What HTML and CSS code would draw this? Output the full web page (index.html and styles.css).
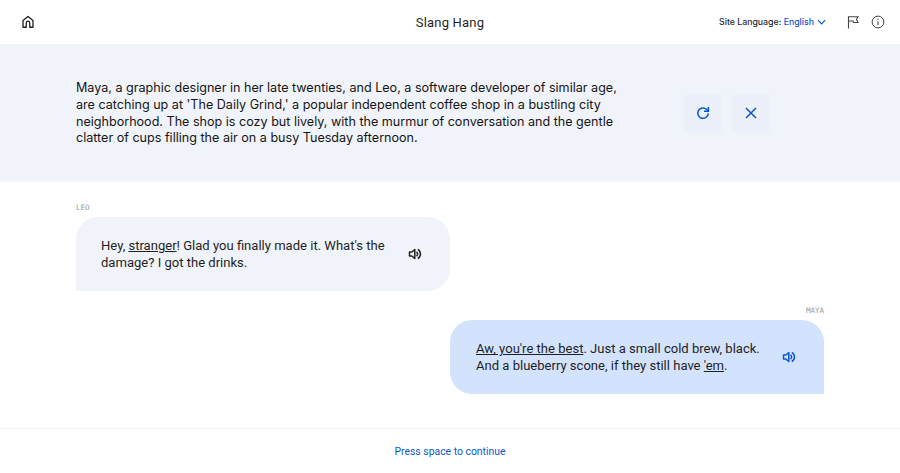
FILE: index.html
```html
<!DOCTYPE html>
<html lang="en">
<head>
<meta charset="utf-8">
<title>Slang Hang</title>
<link rel="stylesheet" href="styles.css">
</head>
<body>
<div class="page">
  <header class="top">
    <a class="icon-link home" aria-label="Home">
      <svg viewBox="0 0 24 24" width="14" height="14"><path d="M3.500 21V9.500L12 2.500l8.500 7V21h-5.500v-7.500a3 3 0 0 0-6 0V21z" fill="none" stroke="#1f1f1f" stroke-width="2.200" stroke-linejoin="round"/></svg>
    </a>
    <h1 class="title">Slang Hang</h1>
    <div class="tools">
      <span class="lang">Site Language: <b class="lang-value">English</b></span>
      <svg class="chev" viewBox="0 0 10 6" width="9" height="6"><path d="M1 1l4 4 4-4" fill="none" stroke="#0b57d0" stroke-width="1.300"/></svg>
      <svg class="flag" viewBox="0 0 14 14" width="14" height="14"><path d="M2.500 13.500V1.800h9.500l-1.500 2.600 1.500 3.100H7.500L7 6H2.500" fill="none" stroke="#444746" stroke-width="1.100"/></svg>
      <svg class="info" viewBox="0 0 14 14" width="14" height="14"><circle cx="7" cy="7" r="5.900" fill="none" stroke="#444746" stroke-width="1"/><path d="M7 6.200v4M7 3.800v1.200" stroke="#444746" stroke-width="1.100"/></svg>
    </div>
  </header>

  <section class="scene">
    <p class="scene-text">Maya, a graphic designer in her late twenties, and Leo, a software developer of similar age, are catching up at 'The Daily Grind,' a popular independent coffee shop in a bustling city neighborhood. The shop is cozy but lively, with the murmur of conversation and the gentle clatter of cups filling the air on a busy Tuesday afternoon.</p>
    <div class="scene-actions">
      <button class="square" aria-label="Restart">
        <svg viewBox="0 0 16 16" width="16" height="16"><path d="M13.200 8.200a5.200 5.200 0 1 1-1.700-3.900L13.300 6" fill="none" stroke="#0b57d0" stroke-width="1.500"/><path d="M13.400 1.900v4.400H9" fill="none" stroke="#0b57d0" stroke-width="1.500"/></svg>
      </button>
      <button class="square" aria-label="Close">
        <svg viewBox="0 0 16 16" width="16" height="16"><path d="M3 3l10 10M13 3L3 13" fill="none" stroke="#0b57d0" stroke-width="1.500"/></svg>
      </button>
    </div>
  </section>

  <main class="chat">
    <div class="msg left">
      <div class="speaker">LEO</div>
      <div class="bubble">
        <p class="bubble-text">Hey, <u>stranger</u>! Glad you finally made it. What's the damage? I got the drinks.</p>
        <svg class="speak" viewBox="0 0 14 14" width="14" height="14"><path d="M1.500 5h2.300L6.800 2.500v9L3.800 9H1.500z" fill="none" stroke="#1f1f1f" stroke-width="1.500" stroke-linejoin="round"/><path d="M8.500 4.800a2.800 2.800 0 0 1 0 4.400M9.800 2.300a5.500 5.500 0 0 1 0 9.400" fill="none" stroke="#1f1f1f" stroke-width="1.500"/></svg>
      </div>
    </div>
    <div class="msg right">
      <div class="speaker">MAYA</div>
      <div class="bubble user">
        <p class="bubble-text"><u>Aw, you're the best</u>. Just a small cold brew, black. And a blueberry scone, if they still have <u>'em</u>.</p>
        <svg class="speak" viewBox="0 0 14 14" width="14" height="14"><path d="M1.500 5h2.300L6.800 2.500v9L3.800 9H1.500z" fill="none" stroke="#0b57d0" stroke-width="1.500" stroke-linejoin="round"/><path d="M8.500 4.800a2.800 2.800 0 0 1 0 4.400M9.800 2.300a5.500 5.500 0 0 1 0 9.400" fill="none" stroke="#0b57d0" stroke-width="1.500"/></svg>
      </div>
    </div>
  </main>

  <footer class="foot">Press space to continue</footer>
</div>
</body>
</html>
```

FILE: styles.css
```css
* { box-sizing: border-box; }
html, body { margin: 0; padding: 0; background: #fff; }
body { font-family: Roboto, "Liberation Sans", sans-serif; color: #1f1f1f; }
.page { width: 900px; height: 473px; display: flex; flex-direction: column; overflow: hidden; }

.top { height: 44px; display: grid; grid-template-columns: 1fr auto 1fr; align-items: center; padding: 0 15px; }
.icon-link { display: flex; margin-left: 6px; }
.title { margin: 0; font-size: 13px; font-weight: 400; letter-spacing: 0.2px; }
.tools { display: flex; align-items: center; justify-content: flex-end; }
.lang { font-family: Inter, sans-serif; font-size: 8.75px; font-weight: 500; }
.lang-value { font-weight: 500; color: #0b57d0; }
.chev { margin-left: 3px; }
.flag { margin-left: 20px; }
.info { margin-left: 11px; }

.scene { height: 138px; background: #f0f3f9; display: flex; align-items: center; padding: 1px 130px 0 76px; }
.scene-text { margin: 0; width: 545px; font-family: Inter, sans-serif; font-size: 12.58px; line-height: 16.6px; color: #161616; flex: none; }
.scene-actions { display: flex; gap: 10px; margin: -1px 0 0 auto; }
.square { width: 38px; height: 38px; border: 0; padding: 0; background: #ebf0fa; border-radius: 2px; display: flex; align-items: center; justify-content: center; }

.chat { flex: 1; padding: 21px 76px 0; display: flex; flex-direction: column; }
.msg { width: 374px; }
.msg.right { align-self: flex-end; margin-top: 15px; }
.speaker { font-family: "DejaVu Sans Mono", monospace; font-size: 7.5px; line-height: 9px; color: #9a9a9a; margin-bottom: 5px; }
.right .speaker { text-align: right; }
.bubble { height: 74px; background: #f0f3f9; border-radius: 22px 22px 22px 0; display: flex; align-items: center; padding: 0 28px 0 25px; gap: 20px; }
.bubble.user { background: #d3e3fd; border-radius: 22px 22px 0 22px; padding-left: 26px; gap: 19px; }
.bubble-text { margin: 2px 0 0; flex: 1; font-size: 13.05px; line-height: 16.6px; }
.speak { flex: none; }

.foot { height: 45px; border-top: 1px solid #eceef0; display: flex; align-items: center; justify-content: center; font-size: 10.4px; color: #0b57d0; }
```
